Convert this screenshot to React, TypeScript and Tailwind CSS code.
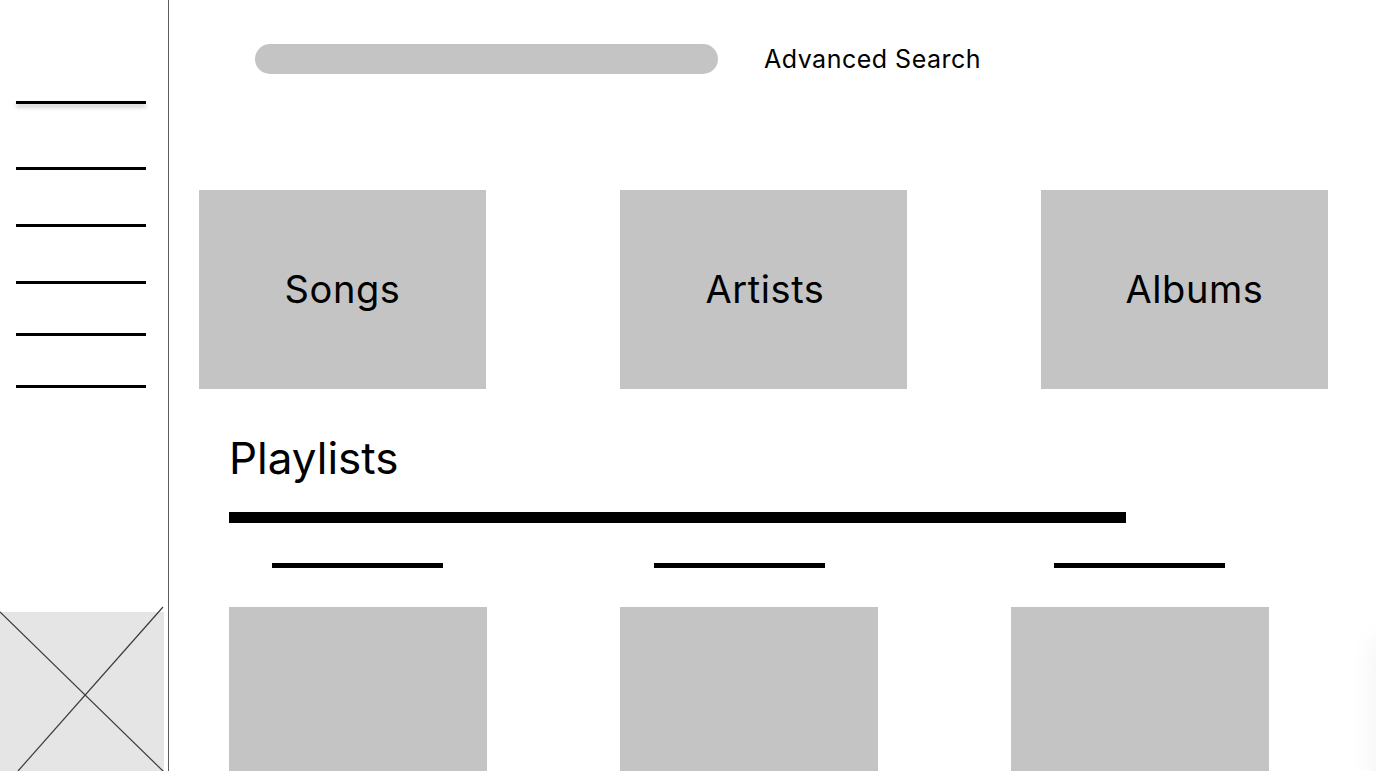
import React from 'react';

const categories = [
  { label: 'Songs', pad: '' },
  { label: 'Artists', pad: 'pl-[3px]' },
  { label: 'Albums', pad: 'pl-[20px]' },
];

const playlistCols = [
  { lineOffset: 'ml-[43px]' },
  { lineOffset: 'ml-[34px]' },
  { lineOffset: 'ml-[43px]' },
];

function Sidebar() {
  return (
    <div className="relative w-[169px] shrink-0 border-r border-[#5e5e5e] flex flex-col">
      <div className="pt-[101px] pl-[16px] flex flex-col">
        <div className="w-[130px] h-[3px] bg-black shadow-[0_3px_4px_rgba(0,0,0,0.25)]" />
        <div className="w-[130px] h-[3px] bg-black mt-[63px]" />
        <div className="w-[130px] h-[3px] bg-black mt-[54px]" />
        <div className="w-[130px] h-[3px] bg-black mt-[54px]" />
        <div className="w-[130px] h-[3px] bg-black mt-[49px]" />
        <div className="w-[130px] h-[3px] bg-black mt-[49px]" />
      </div>

      {/* image placeholder */}
      <div className="mt-auto h-[171px] w-[168px]">
        <svg width="168" height="171" viewBox="0 0 168 171">
          <rect x="0" y="12" width="164" height="159" fill="#e5e5e5" />
          <line x1="0" y1="12" x2="164" y2="172" stroke="#3a3a3a" strokeWidth="1.2" />
          <line x1="163" y1="7" x2="18" y2="171" stroke="#3a3a3a" strokeWidth="1.2" />
        </svg>
      </div>
    </div>
  );
}

export default function App() {
  return (
    <div className="relative w-[1376px] h-[771px] overflow-hidden bg-white flex font-['Inter',sans-serif] text-black">
      <Sidebar />

      <div className="flex-1 flex flex-col">
        {/* Search */}
        <div className="flex items-center pt-[44px] pl-[86px]">
          <div className="w-[463px] h-[30px] rounded-full bg-[#c4c4c4]" />
          <span className="ml-[46px] text-[25px] leading-none tracking-[0.02em]">Advanced Search</span>
        </div>

        {/* Categories */}
        <div className="flex gap-[134px] pl-[30px] mt-[116px]">
          {categories.map(c => (
            <div
              key={c.label}
              className={`w-[287px] h-[199px] bg-[#c4c4c4] flex items-center justify-center text-[38px] tracking-[0.015em] ${c.pad}`}
            >
              {c.label}
            </div>
          ))}
        </div>

        {/* Playlists */}
        <div className="pl-[60px]">
          <h2 className="mt-[47px] text-[44px] leading-none font-normal">Playlists</h2>
          <div className="mt-[32px] w-[897px] h-[11px] bg-black" />
          <div className="flex gap-[133px] mt-[40px]">
            {playlistCols.map((p, i) => (
              <div key={i} className="w-[258px] flex flex-col">
                <div className={`w-[171px] h-[5px] bg-black ${p.lineOffset}`} />
                <div className="mt-[39px] w-[258px] h-[170px] bg-[#c4c4c4]" />
              </div>
            ))}
          </div>
        </div>
      </div>

      {/* faint shadow of off-screen panel */}
      <div className="absolute left-[1380px] top-[640px] w-[200px] h-[200px] bg-white shadow-[0_0_30px_rgba(0,0,0,0.08)]" />
    </div>
  );
}
